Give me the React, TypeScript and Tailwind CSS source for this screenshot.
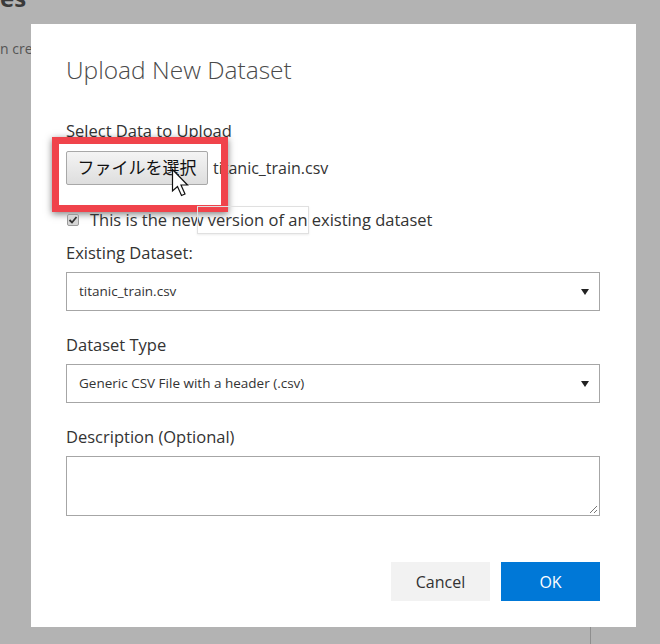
import React from "react";

const font = { fontFamily: '"Segoe UI", "Open Sans", "Noto Sans CJK JP", sans-serif' };

function Caret() {
  return (
    <svg width="8" height="8" viewBox="0 0 8 8" className="shrink-0">
      <path d="M0 1 L8 1 L4 7 Z" fill="#222" />
    </svg>
  );
}

function Cursor() {
  return (
    <svg width="22" height="32" viewBox="0 0 22 32" className="absolute left-[105px] top-[17px]">
      <path
        d="M1.5 1.5 L1.5 23 L6.5 18.5 L10.5 27.5 L14 26 L10 17 L16.5 17 Z"
        fill="#fff"
        stroke="#111"
        strokeWidth="1.2"
        strokeLinejoin="miter"
      />
    </svg>
  );
}

export default function App() {
  return (
    <div className="relative w-[660px] h-[644px] overflow-hidden bg-[#b3b3b3]" style={font}>
      {/* background page content under overlay */}
      <div className="absolute left-0 top-[-16px] text-[24px] leading-[28px] font-bold text-[#3a3a3a]">es</div>
      <div className="absolute left-0 top-[38px] text-[14px] text-[#555]">n cre</div>
      <div className="absolute left-[590px] top-[620px] w-px h-[30px] bg-[#8e8e8e]" />

      {/* dialog */}
      <div className="absolute left-[31px] top-[24px] w-[605px] h-[603px] bg-white pl-[35px] pr-[36px] pt-[30px] flex flex-col">
        <h1 className="text-[24.5px] leading-[32px] font-light text-[#4a4a4a]">Upload New Dataset</h1>

        <div className="mt-[34px] text-[16.5px] leading-[22px] text-[#333]">Select Data to Upload</div>

        <div className="relative mt-[9px] flex items-center h-[34px]">
          <div className="absolute left-[-14px] top-[-14px] w-[176px] h-[75px] border-[7px] border-[#f0434b] shadow-[0_2px_7px_rgba(0,0,0,0.5)]" />
          <button className="relative w-[142px] h-[34px] rounded-[2px] border border-[#a8a8a8] bg-gradient-to-b from-[#f4f4f4] to-[#dedede] text-[17px] text-[#111] flex items-center justify-center">
            ファイルを選択
          </button>
          <span className="ml-[5px] text-[16px] text-[#333]">titanic_train.csv</span>
          <Cursor />
        </div>

        <div className="relative mt-[24px] flex items-center h-[22px]">
          <span className="ml-[1px] w-[12px] h-[12px] rounded-[2px] bg-[#d6d6d6] border border-[#9a9a9a] flex items-center justify-center">
            <svg width="10" height="10" viewBox="0 0 10 10">
              <path d="M1.5 5 L4 7.5 L8.5 2" fill="none" stroke="#333" strokeWidth="1.8" />
            </svg>
          </span>
          <span className="ml-[11px] text-[16.5px] text-[#333]">This is the new version of an existing dataset</span>
          <div className="absolute left-[131px] top-[-3px] w-[112px] h-[28px] border border-[#e0e0e0] shadow-[0_1px_2px_rgba(0,0,0,0.08)]" />
        </div>

        <div className="mt-[11px] text-[16.5px] leading-[22px] text-[#333]">Existing Dataset:</div>
        <div className="mt-[8px] h-[39px] border border-[#a6a6a6] flex items-center justify-between pl-[12px] pr-[10px]">
          <span className="text-[13.5px] text-[#333]">titanic_train.csv</span>
          <Caret />
        </div>

        <div className="mt-[23px] text-[16.5px] leading-[22px] text-[#333]">Dataset Type</div>
        <div className="mt-[8px] h-[39px] border border-[#a6a6a6] flex items-center justify-between pl-[12px] pr-[10px]">
          <span className="text-[13.5px] text-[#333]">Generic CSV File with a header (.csv)</span>
          <Caret />
        </div>

        <div className="mt-[23px] text-[16.5px] leading-[22px] text-[#333]">Description (Optional)</div>
        <div className="relative mt-[8px] h-[60px] border border-[#a6a6a6]">
          <svg width="9" height="9" viewBox="0 0 9 9" className="absolute right-[1px] bottom-[1px]">
            <path d="M8 1 L1 8 M8 5 L5 8" stroke="#777" strokeWidth="1" />
          </svg>
        </div>

        <div className="mt-[46px] flex justify-end gap-[11px]">
          <button className="w-[99px] h-[39px] bg-[#f2f2f2] text-[16px] text-[#333]">Cancel</button>
          <button className="w-[99px] h-[39px] bg-[#0078d7] text-[16px] text-white">OK</button>
        </div>
      </div>
    </div>
  );
}
